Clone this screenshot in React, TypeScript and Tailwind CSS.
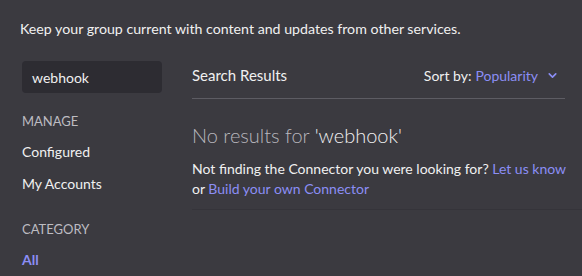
import { ChevronDown } from "lucide-react";

function NavItem({ label, active }: { readonly label: string; readonly active?: boolean }) {
    return (
        <p
            className={
                active
                    ? "h-[32px] leading-[32px] text-[14px] font-bold text-[#8b8ef5]"
                    : "h-[32px] leading-[32px] text-[14px] text-[#f0f0f0]"
            }
        >
            {label}
        </p>
    );
}

export default function App() {
    return (
        <div className="h-[276px] w-[582px] overflow-hidden bg-[#3b3a40] font-['Lato','Noto_Sans',sans-serif] text-[#f0f0f0]">
            <p className="px-[20px] pt-[19px] text-[14.2px] leading-[20px]">
                Keep your group current with content and updates from other services.
            </p>

            <div className="mt-[22px] flex">
                <aside className="w-[192px] shrink-0 pl-[22px] pr-[30px]">
                    <div className="flex h-[32px] items-center rounded-[4px] bg-[#2d2c32] px-[10px] text-[14px]">
                        webhook
                    </div>
                    <p className="mt-[16px] mb-[3px] h-[24px] text-[13px] leading-[24px] uppercase text-[#bdbcc2]">
                        Manage
                    </p>
                    <NavItem label="Configured" />
                    <NavItem label="My Accounts" />
                    <p className="mt-[17px] mb-[3px] h-[24px] text-[13px] leading-[24px] uppercase text-[#bdbcc2]">
                        Category
                    </p>
                    <NavItem label="All" active />
                </aside>

                <main className="flex-1">
                    <div className="mr-[17px] flex h-[38px] items-center justify-between border-b border-[#5d5c63] pb-[8px]">
                        <h2 className="text-[15px]">Search Results</h2>
                        <div className="flex items-center text-[14px]">
                            <span>Sort by:</span>
                            <span className="ml-[4px] text-[#8b8ef5]">Popularity</span>
                            <ChevronDown className="ml-[8px] mr-[6px] h-[13px] w-[13px] text-[#8b8ef5]" strokeWidth={3} />
                        </div>
                    </div>

                    <div className="border-b border-[#35343a] pb-[10px]">
                        <p className="mt-[22px] text-[20px] font-light leading-[28px] text-[#b8b7bd]">
                            No results for <span className="text-[#f0f0f0]">'webhook'</span>
                        </p>
                        <p className="mt-[10px] text-[14px] leading-[20px]">
                            Not finding the Connector you were looking for?{" "}
                            <a className="text-[#8b8ef5]">Let us know</a>
                            <br />
                            or <a className="text-[#8b8ef5]">Build your own Connector</a>
                        </p>
                    </div>
                </main>
            </div>
        </div>
    );
}
